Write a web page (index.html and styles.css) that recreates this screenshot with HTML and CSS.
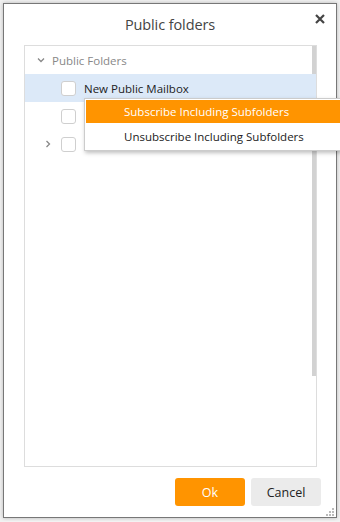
FILE: index.html
```html
<!DOCTYPE html>
<html lang="en">
<head>
  <meta charset="UTF-8" />
  <meta name="viewport" content="width=device-width, initial-scale=1.0" />
  <title>Public folders</title>
  <link rel="stylesheet" href="styles.css">
</head>
<body>
  <div class="dialog">
    <div class="dialog-header">
      <h1>Public folders</h1>
      <svg class="close" width="10" height="10" viewBox="0 0 10 10"><path d="M1 1 L9 9 M9 1 L1 9" stroke="#444" stroke-width="2.2"/></svg>
    </div>

    <div class="tree">
      <div class="scroll-thumb"></div>
      <div class="tree-root">
        <svg class="chev" width="10" height="10" viewBox="0 0 10 10"><path d="M2 3.5 L5 6.5 L8 3.5" fill="none" stroke="#888" stroke-width="1.3"/></svg>
        <span>Public Folders</span>
      </div>
      <div class="tree-row selected">
        <span class="toggle"></span>
        <span class="check"></span>
        <span class="label">New Public Mailbox</span>
      </div>
      <div class="tree-row">
        <span class="toggle"></span>
        <span class="check"></span>
      </div>
      <div class="tree-row">
        <span class="toggle"><svg width="10" height="10" viewBox="0 0 10 10"><path d="M3.5 2 L6.5 5 L3.5 8" fill="none" stroke="#888" stroke-width="1.3"/></svg></span>
        <span class="check"></span>
      </div>

      <div class="menu">
        <div class="menu-item active">Subscribe Including Subfolders</div>
        <div class="menu-item">Unsubscribe Including Subfolders</div>
      </div>
    </div>

    <div class="dialog-footer">
      <button class="btn btn-ok">Ok</button>
      <button class="btn btn-cancel">Cancel</button>
    </div>
    <div class="grip">
      <svg width="9" height="9" viewBox="0 0 9 9" fill="#bbb">
        <rect x="6" y="0" width="2" height="2"/>
        <rect x="3" y="3" width="2" height="2"/><rect x="6" y="3" width="2" height="2"/>
        <rect x="0" y="6" width="2" height="2"/><rect x="3" y="6" width="2" height="2"/><rect x="6" y="6" width="2" height="2"/>
      </svg>
    </div>
  </div>
</body>
</html>
```

FILE: styles.css
```css
body { margin: 0; padding: 3px; background: #f2f2f2; font-family: "Open Sans", "Noto Sans", sans-serif; color: #333; }
.dialog { position: relative; width: 332px; height: 513px; background: white; border: 1px solid #777; box-shadow: 0 0 4px rgba(0,0,0,0.25); display: flex; flex-direction: column; }
.dialog-header { height: 41px; display: flex; align-items: center; justify-content: center; position: relative; }
.dialog-header h1 { margin: 0; font-size: 14.5px; font-weight: normal; color: #444; letter-spacing: -0.1px; }
.close { position: absolute; right: 11px; top: 10px; }
.tree { position: relative; margin: 0 19px 0 20px; height: 420px; border: 1px solid #ddd; }
.scroll-thumb { position: absolute; right: 0; top: 0; width: 4px; height: 330px; background: #d2d2d2; }
.tree-root { position: relative; height: 28px; display: flex; align-items: center; padding-left: 11px; font-size: 11.5px; color: #888; }
.tree-root .chev { margin-right: 6px; }
.tree-row { position: relative; height: 28px; display: flex; align-items: center; font-size: 11.5px; color: #222; }
.tree-row.selected { background: #dce9f8; }
.toggle { width: 20px; margin-left: 18px; margin-right: -2px; display: flex; align-items: center; }
.check { width: 13px; height: 13px; border: 1px solid #cfcfcf; border-radius: 3px; background: white; margin-right: 8px; }
.menu { position: absolute; left: 59px; top: 52px; width: 254px; background: white; border: 1px solid #ccc; box-shadow: 1px 2px 4px rgba(0,0,0,0.25); padding: 1px 1px 1px; z-index: 2; }
.menu-item { height: 23px; display: flex; align-items: center; padding-left: 38px; font-size: 11.5px; color: #222; }
.menu-item.active { background: #ff9400; color: white; }
.menu-item + .menu-item { height: 26px; }
.dialog-footer { display: flex; justify-content: flex-end; gap: 6px; padding: 11px 15px 0 0; }
.btn { width: 70px; height: 28px; border: none; border-radius: 3px; font-family: inherit; font-size: 12.5px; cursor: pointer; }
.btn-ok { background: #ff9400; color: white; }
.btn-cancel { background: #ebebeb; color: #222; }
.grip { position: absolute; right: 1px; bottom: 0; line-height: 0; }
```
